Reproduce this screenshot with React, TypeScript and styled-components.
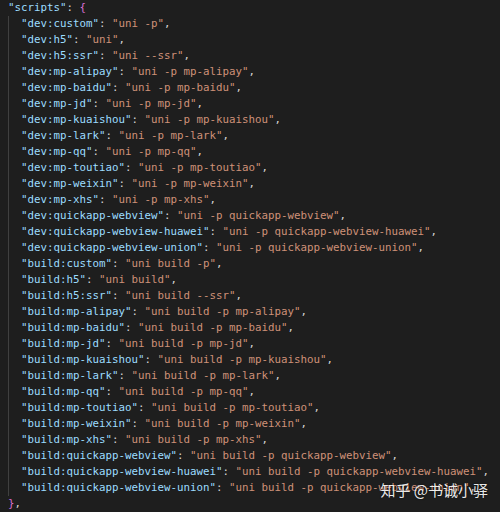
import React from "react";
import styled, { createGlobalStyle } from "styled-components";

const GlobalStyle = createGlobalStyle`
  html, body {
    margin: 0;
    padding: 0;
    background: #1e1e1e;
  }
`;

const Editor = styled.div`
  position: relative;
  width: 500px;
  height: 512px;
  box-sizing: border-box;
  padding: 0 0 0 8px;
  background: #1e1e1e;
  overflow: hidden;
  font-family: "DejaVu Sans Mono", "Liberation Mono", monospace;
  font-size: 10.8px;
  line-height: 16px;
  color: #d4d4d4;
  white-space: pre;
`;

const Line = styled.div`
  height: 16px;
`;

const Block = styled.div`
  border-left: 1px solid #404040;
  padding-left: 12px;
`;

const Key = styled.span`
  color: #9cdcfe;
`;

const Str = styled.span`
  color: #ce9178;
`;

const Punct = styled.span`
  color: #d4d4d4;
`;

const Brace = styled.span`
  color: #da70d6;
`;

const Watermark = styled.div`
  position: absolute;
  right: 12px;
  bottom: 12px;
  font-family: "Noto Sans CJK SC", "Noto Sans", sans-serif;
  font-size: 15px;
  line-height: 20px;
  color: rgba(255, 255, 255, 0.92);
  text-shadow: 0 0 2px rgba(0, 0, 0, 0.5);
  white-space: pre;
`;

const entries: [string, string][] = [
  ["dev:custom", "uni -p"],
  ["dev:h5", "uni"],
  ["dev:h5:ssr", "uni --ssr"],
  ["dev:mp-alipay", "uni -p mp-alipay"],
  ["dev:mp-baidu", "uni -p mp-baidu"],
  ["dev:mp-jd", "uni -p mp-jd"],
  ["dev:mp-kuaishou", "uni -p mp-kuaishou"],
  ["dev:mp-lark", "uni -p mp-lark"],
  ["dev:mp-qq", "uni -p mp-qq"],
  ["dev:mp-toutiao", "uni -p mp-toutiao"],
  ["dev:mp-weixin", "uni -p mp-weixin"],
  ["dev:mp-xhs", "uni -p mp-xhs"],
  ["dev:quickapp-webview", "uni -p quickapp-webview"],
  ["dev:quickapp-webview-huawei", "uni -p quickapp-webview-huawei"],
  ["dev:quickapp-webview-union", "uni -p quickapp-webview-union"],
  ["build:custom", "uni build -p"],
  ["build:h5", "uni build"],
  ["build:h5:ssr", "uni build --ssr"],
  ["build:mp-alipay", "uni build -p mp-alipay"],
  ["build:mp-baidu", "uni build -p mp-baidu"],
  ["build:mp-jd", "uni build -p mp-jd"],
  ["build:mp-kuaishou", "uni build -p mp-kuaishou"],
  ["build:mp-lark", "uni build -p mp-lark"],
  ["build:mp-qq", "uni build -p mp-qq"],
  ["build:mp-toutiao", "uni build -p mp-toutiao"],
  ["build:mp-weixin", "uni build -p mp-weixin"],
  ["build:mp-xhs", "uni build -p mp-xhs"],
  ["build:quickapp-webview", "uni build -p quickapp-webview"],
  ["build:quickapp-webview-huawei", "uni build -p quickapp-webview-huawei"],
  ["build:quickapp-webview-union", "uni build -p quickapp-webview-union"],
];

export default function App() {
  return (
    <>
      <GlobalStyle />
      <Editor>
        <Line>
          <Key>"scripts"</Key>
          <Punct>: </Punct>
          <Brace>{"{"}</Brace>
        </Line>
        <Block>
          {entries.map(([k, v]) => (
            <Line key={k}>
              <Key>"{k}"</Key>
              <Punct>: </Punct>
              <Str>"{v}"</Str>
              <Punct>,</Punct>
            </Line>
          ))}
        </Block>
        <Line>
          <Brace>{"}"}</Brace>
          <Punct>,</Punct>
        </Line>
        <Watermark>知乎 @书诚小驿</Watermark>
      </Editor>
    </>
  );
}
